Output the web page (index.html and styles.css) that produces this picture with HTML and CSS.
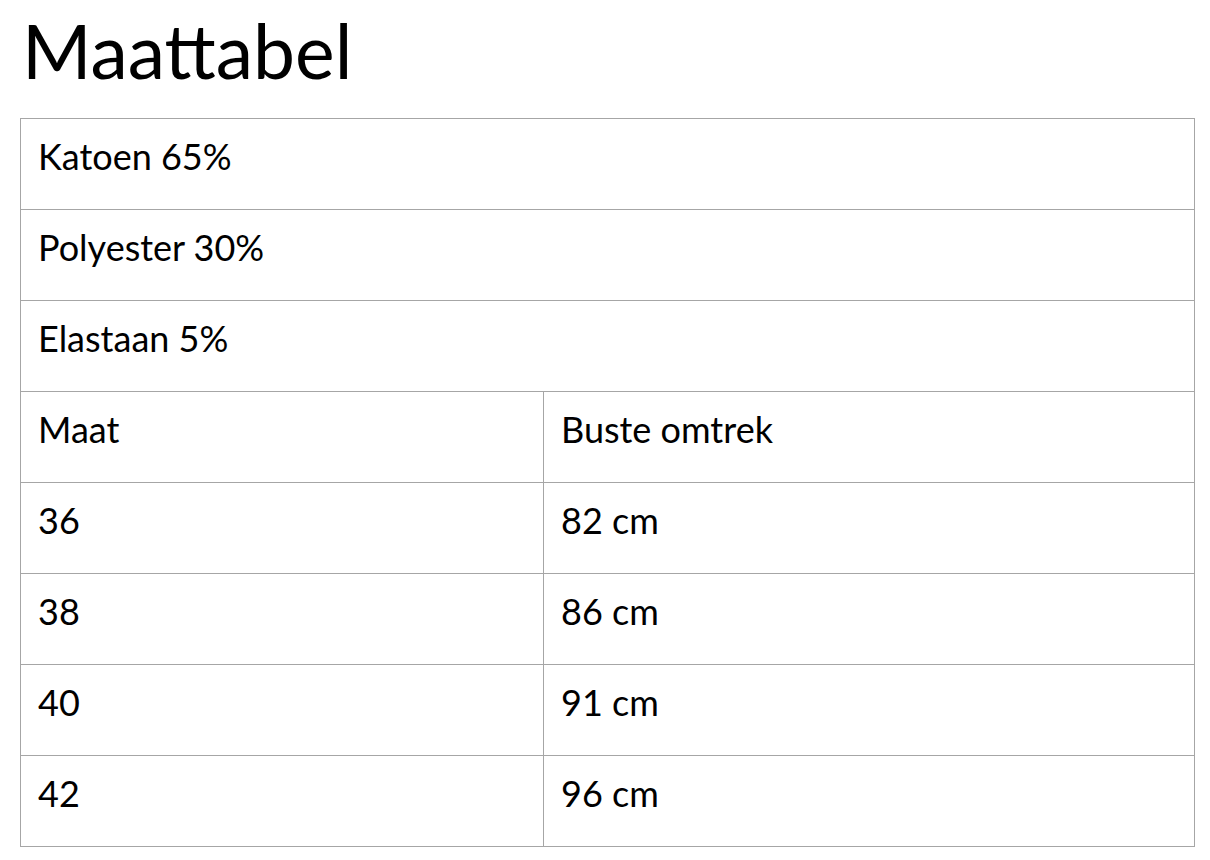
FILE: index.html
```html
<!DOCTYPE html>
<html lang="nl">
<head>
<meta charset="utf-8">
<title>Maattabel</title>
<link rel="stylesheet" href="styles.css">
</head>
<body>
<h1 class="title">Maattabel</h1>
<table class="size-table">
  <colgroup>
    <col class="col-size">
    <col class="col-bust">
  </colgroup>
  <tr><td colspan="2">Katoen 65%</td></tr>
  <tr><td colspan="2">Polyester 30%</td></tr>
  <tr><td colspan="2">Elastaan 5%</td></tr>
  <tr><td>Maat</td><td>Buste omtrek</td></tr>
  <tr><td>36</td><td>82 cm</td></tr>
  <tr><td>38</td><td>86 cm</td></tr>
  <tr><td>40</td><td>91 cm</td></tr>
  <tr><td>42</td><td>96 cm</td></tr>
</table>
</body>
</html>
```
FILE: styles.css
```css
html, body {
  margin: 0;
  padding: 0;
  background: #ffffff;
}
body {
  font-family: Lato, "Open Sans", sans-serif;
  color: #000000;
}
.title {
  margin: 13px 0 31px 22px;
  font-size: 75px;
  line-height: 74px;
  font-weight: 400;
}
.size-table {
  margin-left: 20px;
  width: 1175px;
  border-collapse: collapse;
  table-layout: fixed;
}
.size-table .col-size {
  width: 523px;
}
.size-table tr {
  height: 91px;
}
.size-table td {
  border: 1px solid #a6a6a6;
  padding: 17px 17px 0 17px;
  vertical-align: top;
  font-size: 36px;
  line-height: 40px;
  height: 74px;
  box-sizing: border-box;
}
```
